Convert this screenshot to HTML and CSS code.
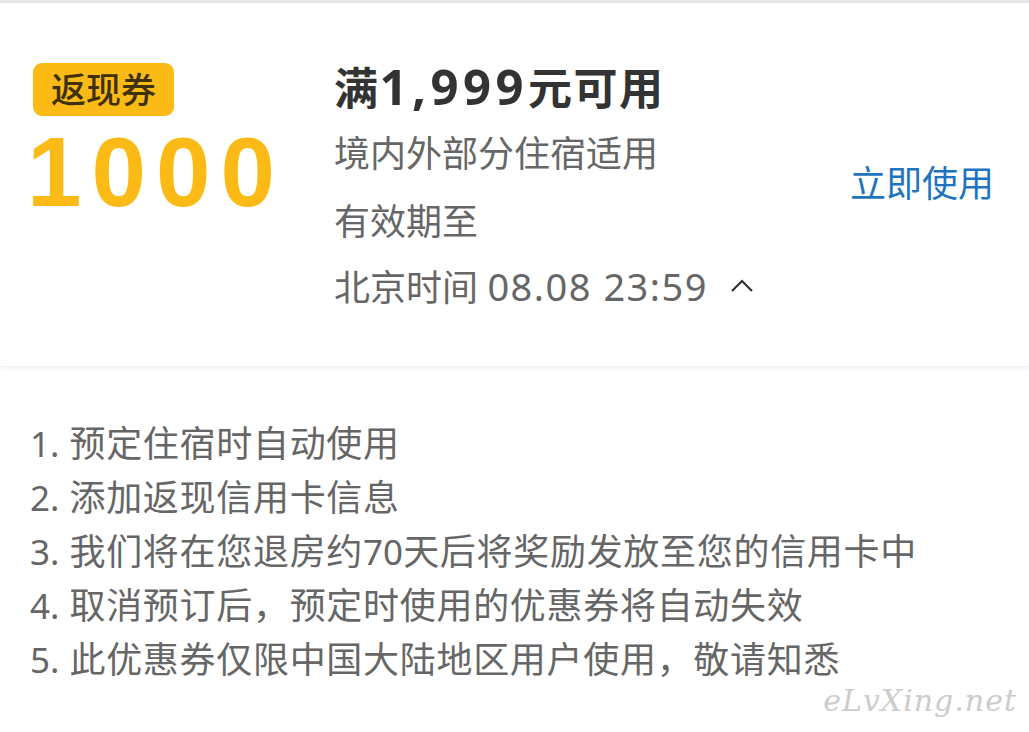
FILE: index.html
```html
<!DOCTYPE html>
<html>
<head>
  <meta charset="utf-8">
  <title>返现券</title>
  <link rel="stylesheet" href="styles.css">
</head>
<body>
  <div class="topline"></div>

  <div class="card">
    <div class="amount-col">
      <span class="badge">返现券</span>
      <div class="amount">1000</div>
    </div>

    <div class="info-col">
      <div class="title">满<span class="num">1,999</span>元可用</div>
      <div class="line">境内外部分住宿适用</div>
      <div class="line">有效期至</div>
      <div class="line expire">北京时间 <span class="num">08.08 23:59</span>
        <svg class="caret" width="24" height="16" viewBox="0 0 24 16">
          <path d="M2 14 L12 4 L22 14" fill="none" stroke="#333" stroke-width="2.2"/>
        </svg>
      </div>
    </div>

    <div class="action-col">
      <a class="use-btn">立即使用</a>
    </div>
  </div>

  <ol class="rules">
    <li><span class="num">1.</span> 预定住宿时自动使用</li>
    <li><span class="num">2.</span> 添加返现信用卡信息</li>
    <li><span class="num">3.</span> 我们将在您退房约<span class="num">70</span>天后将奖励发放至您的信用卡中</li>
    <li><span class="num">4.</span> 取消预订后，预定时使用的优惠券将自动失效</li>
    <li><span class="num">5.</span> 此优惠券仅限中国大陆地区用户使用，敬请知悉</li>
  </ol>

  <div class="watermark">eLvXing.net</div>
</body>
</html>
```

FILE: styles.css
```css
body {
  margin: 0;
  font-family: "Noto Sans", "Noto Sans CJK SC", sans-serif;
  background-color: #ffffff;
  width: 1029px;
  height: 732px;
  overflow: hidden;
  position: relative;
}

.topline {
  height: 3px;
  background-color: #e6e6e6;
}

.card {
  display: flex;
  height: 364px;
  background-color: #fff;
  box-shadow: 0 2px 4px rgba(0, 0, 0, 0.05);
  border-bottom: 1px solid #f2f2f2;
  box-sizing: border-box;
}

.amount-col {
  width: 307px;
  padding-left: 27px;
  padding-top: 60px;
}

.badge {
  display: inline-block;
  margin-left: 6px;
  padding: 0 18px;
  height: 53px;
  line-height: 53px;
  font-size: 35px;
  font-weight: 500;
  color: #3e3109;
  background-color: #fbba16;
  border-radius: 9px;
}

.amount {
  margin-top: 6px;
  font-family: "Liberation Sans", Arial, sans-serif;
  font-size: 98px;
  line-height: 100px;
  font-weight: 700;
  color: #fbba16;
  letter-spacing: 10px;
}

.info-col {
  flex: 1;
  padding-top: 54px;
  color: #666;
}

.title {
  font-size: 44px;
  line-height: 58px;
  font-weight: 700;
  color: #333;
  margin-bottom: 14px;
  letter-spacing: 1.5px;
}

.title .num {
  font-size: 49px;
  letter-spacing: 4.5px;
}

.line {
  font-size: 36px;
  line-height: 46px;
  margin-bottom: 22px;
}

.line.expire {
  margin-bottom: 0;
  margin-top: -4px;
}

.line .num {
  font-size: 38px;
  letter-spacing: 1.5px;
}

.caret {
  margin-left: 13px;
  vertical-align: 8px;
}

.action-col {
  display: flex;
  align-items: center;
  padding-right: 35px;
  padding-bottom: 6px;
}

.use-btn {
  font-size: 36px;
  color: #1f74c1;
  cursor: pointer;
}

.rules {
  list-style: none;
  margin: 0;
  padding: 50px 0 0 30px;
  color: #666;
}

.rules li {
  font-size: 36px;
  line-height: 54px;
  letter-spacing: 0.7px;
}

.rules .num {
  font-size: 35px;
  letter-spacing: 0;
}

.watermark {
  position: absolute;
  right: 12px;
  bottom: 14px;
  font-family: "DejaVu Serif", serif;
  font-style: italic;
  font-size: 30px;
  color: #cccccc;
  letter-spacing: 1px;
}
```
